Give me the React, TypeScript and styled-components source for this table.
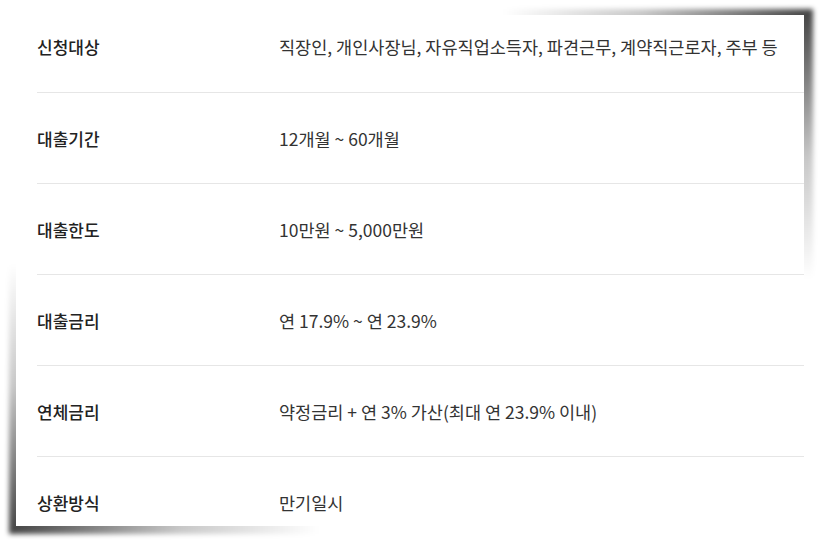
import styled, { createGlobalStyle } from 'styled-components'

const GlobalStyle = createGlobalStyle`
  html {
    background: #ffffff;
  }
  body {
    margin: 0;
    padding: 0;
    font-family: 'Noto Sans CJK KR', 'Noto Sans', sans-serif;
  }
`

const Page = styled.div`
  width: 822px;
  height: 544px;
  padding: 15px 0 0 16px;
  box-sizing: border-box;
`

const Sheet = styled.div`
  position: relative;
  width: 788px;
  height: 511px;

  /* captured-page shadow: heavy at the top right, heavy at the bottom left */
  &::before,
  &::after {
    content: '';
    position: absolute;
    width: 310px;
    height: 270px;
    z-index: -1;
    filter: blur(2.5px);
  }
  &::before {
    top: -6px;
    right: -9px;
    background: radial-gradient(
      farthest-side at 100% 0,
      rgba(0, 0, 0, 0.75),
      rgba(0, 0, 0, 0.22) 55%,
      rgba(0, 0, 0, 0)
    );
  }
  &::after {
    bottom: -8px;
    left: -7px;
    background: radial-gradient(
      farthest-side at 0 100%,
      rgba(0, 0, 0, 0.75),
      rgba(0, 0, 0, 0.22) 55%,
      rgba(0, 0, 0, 0)
    );
  }
`

const Paper = styled.div`
  position: relative;
  height: 100%;
  background: #ffffff;
  overflow: hidden;
  padding-left: 21px;
  box-sizing: border-box;
`

const Table = styled.dl`
  margin: 0;
`

const Row = styled.div<{ $first?: boolean }>`
  display: grid;
  grid-template-columns: 242px 1fr;
  align-items: center;
  box-sizing: border-box;
  height: ${(p) => (p.$first ? '78px' : '91px')};
  padding-bottom: ${(p) => (p.$first ? '15px' : '0')};
  border-bottom: 1px solid #e6e6e6;
`

const Label = styled.dt`
  margin: 0;
  font-size: 17px;
  font-weight: 500;
  color: #222222;
`

const Value = styled.dd`
  margin: 0;
  font-size: 17.5px;
  font-weight: 400;
  color: #333333;
  white-space: nowrap;
`

const rows = [
  ['신청대상', '직장인, 개인사장님, 자유직업소득자, 파견근무, 계약직근로자, 주부 등'],
  ['대출기간', '12개월 ~ 60개월'],
  ['대출한도', '10만원 ~ 5,000만원'],
  ['대출금리', '연 17.9% ~ 연 23.9%'],
  ['연체금리', '약정금리 + 연 3% 가산(최대 연 23.9% 이내)'],
  ['상환방식', '만기일시'],
]

const App = () => {
  return (
    <Page>
      <GlobalStyle />
      <Sheet>
        <Paper>
          <Table>
            {rows.map(([label, value], i) => (
              <Row key={label} $first={i === 0}>
                <Label>{label}</Label>
                <Value>{value}</Value>
              </Row>
            ))}
          </Table>
        </Paper>
      </Sheet>
    </Page>
  )
}

export default App
